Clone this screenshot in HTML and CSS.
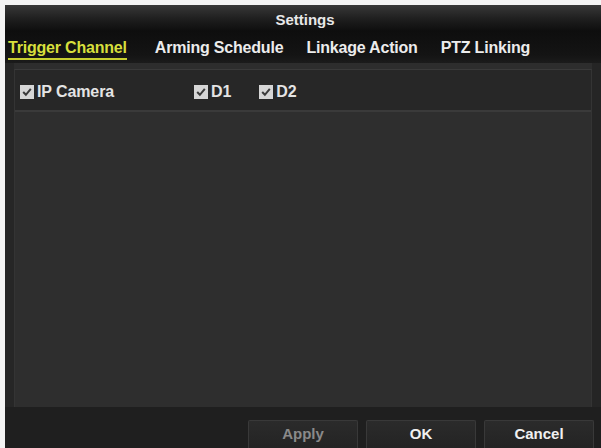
FILE: index.html
```html
<!DOCTYPE html>
<html>
<head>
<meta charset="utf-8">
<link rel="stylesheet" href="styles.css">
</head>
<body>
<div class="window">
  <div class="titlebar">Settings</div>
  <div class="tabs">
    <span class="tab active">Trigger Channel</span>
    <span class="tab">Arming Schedule</span>
    <span class="tab">Linkage Action</span>
    <span class="tab">PTZ Linking</span>
  </div>
  <div class="body">
    <div class="panel">
      <div class="row">
        <label class="item item-ip"><span class="cb"><svg viewBox="0 0 14 14" width="14" height="14"><path d="M3.2 7 L5.9 9.8 L10.8 3.9" fill="none" stroke="#3a3a3a" stroke-width="2"/></svg></span>IP Camera</label>
        <label class="item item-d1"><span class="cb"><svg viewBox="0 0 14 14" width="14" height="14"><path d="M3.2 7 L5.9 9.8 L10.8 3.9" fill="none" stroke="#3a3a3a" stroke-width="2"/></svg></span>D1</label>
        <label class="item"><span class="cb"><svg viewBox="0 0 14 14" width="14" height="14"><path d="M3.2 7 L5.9 9.8 L10.8 3.9" fill="none" stroke="#3a3a3a" stroke-width="2"/></svg></span>D2</label>
      </div>
    </div>
  </div>
  <div class="footer">
    <button class="btn disabled">Apply</button>
    <button class="btn">OK</button>
    <button class="btn">Cancel</button>
  </div>
</div>
</body>
</html>
```

FILE: styles.css
```css
html, body {
  margin: 0;
  padding: 0;
  background: #f4f4f4;
  width: 601px;
  height: 448px;
  overflow: hidden;
}
.window {
  margin: 5px 0 0 5px;
  height: 443px;
  display: flex;
  flex-direction: column;
  background: #2b2b2b;
  font-family: "Liberation Sans", Arial, sans-serif;
  font-weight: bold;
  color: #e6e6e6;
  overflow: hidden;
}
.titlebar {
  height: 26px;
  flex: none;
  display: flex;
  align-items: center;
  justify-content: center;
  font-size: 15px;
  color: #e8e8e8;
  background: linear-gradient(#383838, #1e1e1e 55%, #0e0e0e);
  padding: 2px 0 0 4px;
  box-sizing: border-box;
}
.tabs {
  height: 32px;
  flex: none;
  display: flex;
  align-items: flex-start;
  padding: 8px 0 0 3px;
  box-sizing: border-box;
  background: linear-gradient(#0e0e0e, #141414 75%, #1b1b1b);
  font-size: 16px;
  line-height: 18px;
}
.tab {
  color: #ececec;
  padding-bottom: 1px;
  letter-spacing: -0.2px;
}
.tab:nth-child(2) { margin-left: 28px; }
.tab:nth-child(3) { margin-left: 23px; }
.tab:nth-child(4) { margin-left: 23px; }
.tab.active {
  color: #d7df3c;
  border-bottom: 2px solid #c8d030;
}
.body {
  flex: 1;
  display: flex;
  padding: 6px 9px 0 9px;
  background: linear-gradient(90deg, #262626 0, #262626 9px, #2d2d2d 9px, #2d2d2d calc(100% - 9px), #252525 calc(100% - 9px));
}
.panel {
  flex: 1;
  background: #2e2e2e;
  border-top: 1px solid #3a3a3a;
  border-left: 1px solid #343434;
  border-right: 1px solid #343434;
}
.row {
  height: 42px;
  display: flex;
  align-items: center;
  padding: 3px 0 0 5px;
  background: #272727;
  border-bottom: 2px solid #3a3a3a;
  box-sizing: border-box;
  font-size: 16px;
}
.item {
  display: flex;
  align-items: center;
  color: #e4e4e4;
  letter-spacing: -0.1px;
}
.item-ip { margin-right: 80px; }
.item-d1 { margin-right: 28px; }
.cb {
  width: 14px;
  height: 14px;
  background: #d6d6d6;
  margin-right: 3px;
  display: flex;
}
.footer {
  height: 41px;
  flex: none;
  background: #1f1f1f;
  display: flex;
  justify-content: flex-end;
  align-items: flex-start;
  padding: 13px 7px 0 0;
  box-sizing: border-box;
  gap: 8px;
}
.btn {
  width: 110px;
  height: 34px;
  flex: none;
  background: linear-gradient(#2b2b2b, #222222);
  border: 1px solid #393939;
  border-bottom: none;
  border-radius: 2px 2px 0 0;
  color: #f0f0f0;
  font-family: "Liberation Sans", Arial, sans-serif;
  font-weight: bold;
  font-size: 15px;
  padding: 0 0 8px;
}
.btn.disabled { color: #8a8a8a; }
```
